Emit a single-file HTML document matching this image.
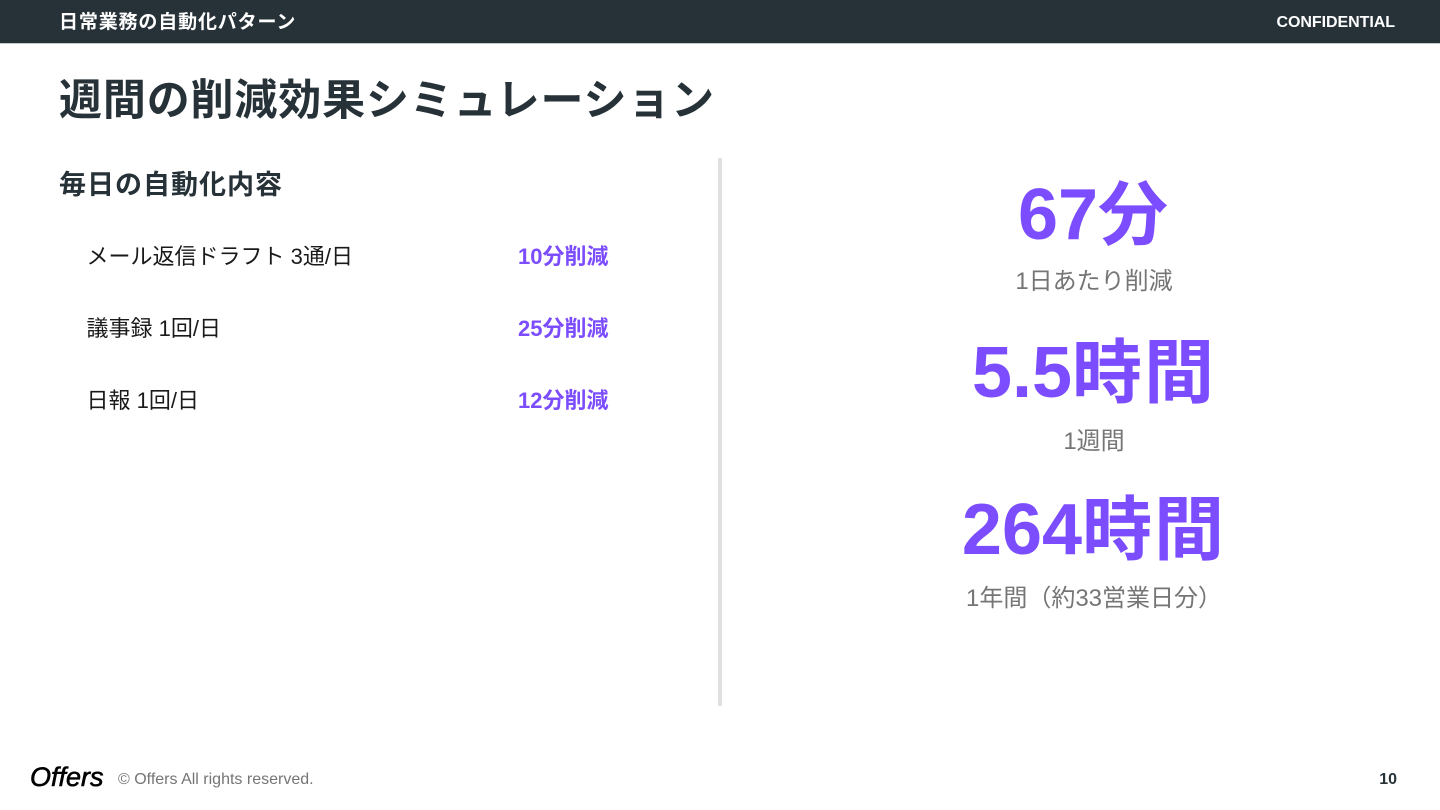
<!DOCTYPE html>
<html lang="ja"><head><meta charset="utf-8"><style>
*{margin:0;padding:0;box-sizing:border-box}
html,body{width:1440px;height:810px;overflow:hidden;background:#fff}
body{font-family:"Liberation Sans","Noto Sans CJK JP",sans-serif;position:relative}
.a{position:absolute;white-space:nowrap}
.bar{left:0;top:0;width:1440px;height:44px;background:#263238;border-bottom:1px solid #c5cacc}
.c{left:722px;width:744px;text-align:center}
.n{font-size:72px;font-weight:700;color:#7c4dff;line-height:84px}
.n span{font-size:70px;letter-spacing:2px}
.s{font-size:24px;color:#757575;line-height:32px}
.li{left:86.5px;font-size:22px;color:#1a1a1a;line-height:32px}
.v{left:518px;font-size:22px;font-weight:700;color:#7c4dff;line-height:32px}
</style></head><body>
<div class="a bar"></div>
<div class="a" style="left:59px;top:10px;font-size:19px;line-height:26px;font-weight:700;color:#fff;letter-spacing:.85px">日常業務の自動化パターン</div>
<div class="a" style="right:45px;top:13px;font-size:16px;line-height:20px;font-weight:700;color:#fff;letter-spacing:-.05px">CONFIDENTIAL</div>
<div class="a" style="left:59px;top:71px;font-size:43px;line-height:60px;font-weight:700;color:#263238;letter-spacing:.85px">週間の削減効果シミュレーション</div>
<div class="a" style="left:59px;top:166px;font-size:27px;line-height:38px;font-weight:700;color:#263238;letter-spacing:1px">毎日の自動化内容</div>
<div class="a li" style="top:241px">メール返信ドラフト 3通/日</div>
<div class="a v" style="top:241px">10分削減</div>
<div class="a li" style="top:313px">議事録 1回/日</div>
<div class="a v" style="top:313px">25分削減</div>
<div class="a li" style="top:385px">日報 1回/日</div>
<div class="a v" style="top:385px">12分削減</div>
<div class="a" style="left:718px;top:158px;width:4px;height:548px;background:#e0e0e0"></div>
<div class="a c n" style="top:173px">67<span>分</span></div>
<div class="a c s" style="top:266px">1日あたり削減</div>
<div class="a c n" style="top:331px">5.5<span>時間</span></div>
<div class="a c s" style="top:426px">1週間</div>
<div class="a c n" style="top:488px">264<span>時間</span></div>
<div class="a c s" style="top:583px">1年間（約33営業日分）</div>
<div class="a" style="left:30px;top:761px;font-size:27px;line-height:32px;font-style:italic;color:#000;-webkit-text-stroke:.6px #000">Offers</div>
<div class="a" style="left:118px;top:770px;font-size:16px;line-height:20px;color:#757575">© Offers All rights reserved.</div>
<div class="a" style="right:43px;top:770px;font-size:16px;line-height:20px;font-weight:700;color:#263238">10</div>
</body></html>
